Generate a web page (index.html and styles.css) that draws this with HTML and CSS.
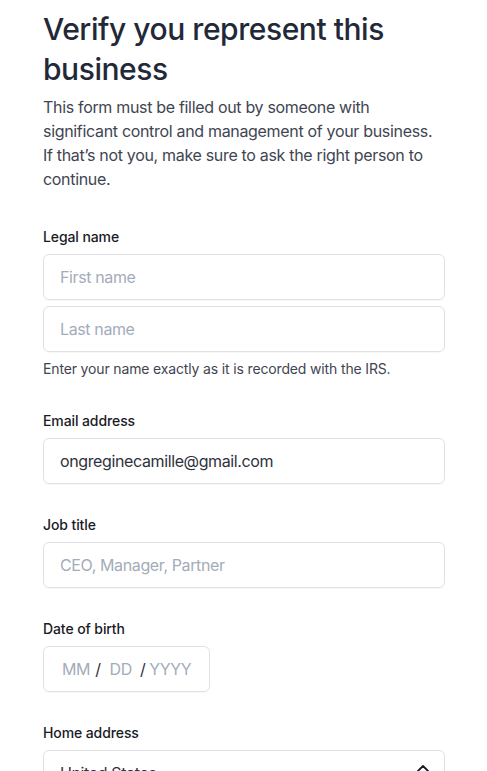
FILE: index.html
```html
<!DOCTYPE html>
<html>
<head>
<meta charset="utf-8">
<link rel="stylesheet" href="styles.css">
</head>
<body>
<main class="page">
  <h1 class="title">Verify you represent this business</h1>
  <p class="intro">This form must be filled out by someone with significant control and management of your business. If that’s not you, make sure to ask the right person to continue.</p>

  <section class="group group-legal">
    <label class="label">Legal name</label>
    <div class="input placeholder">First name</div>
    <div class="input placeholder stacked">Last name</div>
    <p class="help">Enter your name exactly as it is recorded with the IRS.</p>
  </section>

  <section class="group">
    <label class="label">Email address</label>
    <div class="input value">ongreginecamille@gmail.com</div>
  </section>

  <section class="group">
    <label class="label">Job title</label>
    <div class="input placeholder">CEO, Manager, Partner</div>
  </section>

  <section class="group">
    <label class="label">Date of birth</label>
    <div class="input date">
      <span class="ph">MM</span><span class="slash s1">/</span><span class="ph">DD</span><span class="slash s2">/</span><span class="ph">YYYY</span>
    </div>
  </section>

  <section class="group">
    <label class="label">Home address</label>
    <div class="input value select">
      <span>United States</span>
      <svg class="chev" width="14" height="10" viewBox="0 0 14 10"><path d="M2 8 L7 3 L12 8" fill="none" stroke="#1a1b25" stroke-width="1.8" stroke-linecap="round" stroke-linejoin="round"/></svg>
    </div>
  </section>
</main>
</body>
</html>
```
FILE: styles.css
```css
html, body {
  margin: 0;
  padding: 0;
  background: #ffffff;
}
body {
  font-family: Inter, "Noto Sans", sans-serif;
  color: #30313d;
  height: 771px;
  overflow: hidden;
}
.page {
  width: 402px;
  padding: 9px 0 0 43px;
  display: flex;
  flex-direction: column;
}
.title {
  margin: 0;
  font-size: 30px;
  line-height: 40px;
  font-weight: 500;
  color: #232839;
  letter-spacing: -0.45px;
}
.intro {
  margin: 6px 0 0;
  font-size: 16px;
  line-height: 24px;
  color: #414552;
  letter-spacing: -0.32px;
}
.group {
  display: flex;
  flex-direction: column;
  margin-top: 31px;
}
.group-legal {
  margin-top: 36px;
}
.label {
  font-size: 14px;
  line-height: 20px;
  font-weight: 500;
  color: #1a1b25;
  margin-bottom: 7px;
  letter-spacing: -0.1px;
}
.input {
  box-sizing: border-box;
  height: 46px;
  border: 1px solid #dfe1e6;
  border-radius: 6px;
  padding: 0 16px;
  display: flex;
  align-items: center;
  font-size: 16px;
  letter-spacing: -0.38px;
  box-shadow: 0 1px 1px rgba(0,0,0,0.03);
}
.stacked {
  margin-top: 6px;
}
.placeholder, .ph {
  color: #a3acba;
}
.value {
  color: #30313d;
}
.help {
  margin: 8px 0 0;
  font-size: 14px;
  line-height: 18px;
  color: #414552;
  letter-spacing: -0.15px;
}
.group-legal + .group {
  margin-top: 33px;
}
.date {
  width: 167px;
  padding-left: 18px;
}
.slash {
  color: #30313d;
}
.s1 {
  margin: 0 9px 0 5px;
}
.s2 {
  margin: 0 4px 0 8px;
}
.select {
  justify-content: space-between;
  align-items: flex-start;
  padding-top: 12px;
  padding-right: 14px;
}
.chev {
  margin-top: 0;
}
```
